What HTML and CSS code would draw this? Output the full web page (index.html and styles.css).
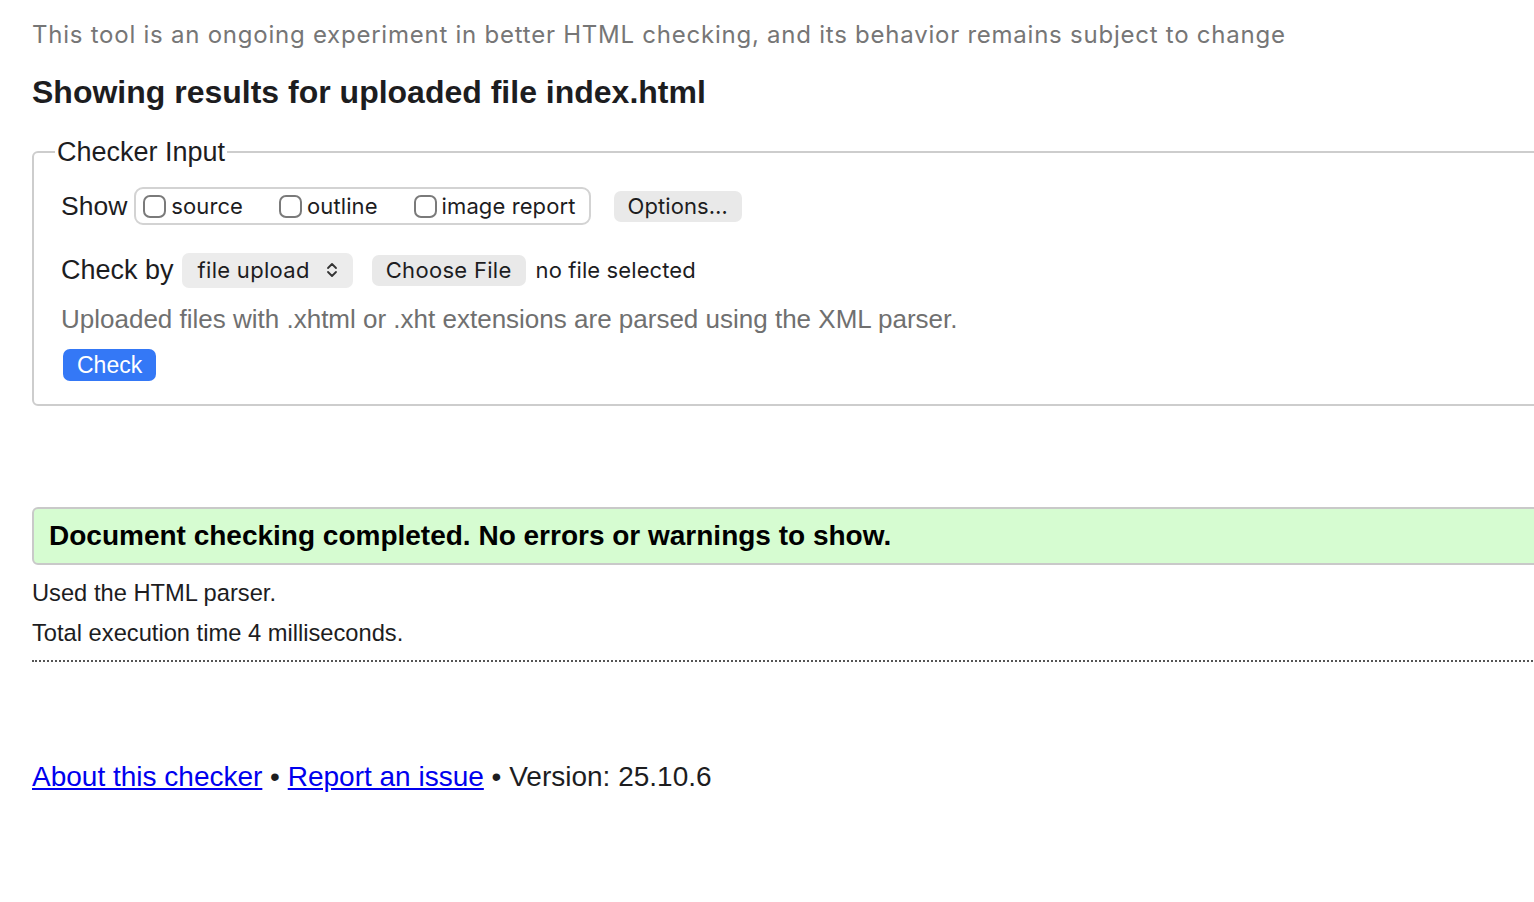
FILE: index.html
```html
<!DOCTYPE html>
<html lang="en">
<head>
<meta charset="utf-8">
<title>Nu Html Checker</title>
<link rel="stylesheet" href="styles.css">
</head>
<body>
<div class="page">
  <p class="intro">This tool is an ongoing experiment in better HTML checking, and its behavior remains subject to change</p>
  <h2 class="title">Showing results for uploaded file index.html</h2>
  <fieldset class="checker">
    <legend>Checker Input</legend>
    <div class="row">
      <span class="label">Show</span>
      <div class="group">
        <label class="opt"><span class="box"></span>source</label>
        <label class="opt"><span class="box"></span>outline</label>
        <label class="opt"><span class="box"></span>image report</label>
      </div>
      <button class="btn options">Options…</button>
    </div>
    <div class="row row2">
      <span class="label">Check by</span>
      <div class="select">file upload
        <svg class="chev" width="12" height="18" viewBox="0 0 12 18"><path d="M2 7 L6 3 L10 7 M2 11 L6 15 L10 11" fill="none" stroke="#333" stroke-width="1.8" stroke-linecap="round" stroke-linejoin="round"/></svg>
      </div>
      <button class="btn choose">Choose File</button>
      <span class="nofile">no file selected</span>
    </div>
    <p class="note">Uploaded files with .xhtml or .xht extensions are parsed using the XML parser.</p>
    <button class="submit">Check</button>
  </fieldset>
  <div class="success"><h2>Document checking completed. No errors or warnings to show.</h2></div>
  <p class="stat first">Used the HTML parser.</p>
  <p class="stat">Total execution time 4 milliseconds.</p>
  <hr class="dots">
  <p class="footer"><a href="#">About this checker</a> • <a href="#">Report an issue</a> • Version: 25.10.6</p>
</div>
</body>
</html>
```

FILE: styles.css
```css
html {
  overflow: hidden;
}
body {
  margin: 0;
  background: #fff;
  font-family: "Liberation Sans", Arial, sans-serif;
  color: #222;
}
.page {
  width: 1540px;
  padding-left: 32px;
}
.intro {
  margin: 20px 0 0;
  font-family: Inter, "Liberation Sans", sans-serif;
  font-size: 24px;
  letter-spacing: 0.76px;
  line-height: 30px;
  color: #767676;
}
.title {
  margin: 24px 0 0;
  font-size: 32px;
  line-height: 36px;
  font-weight: bold;
  color: #1d1d1f;
}
.checker {
  margin: 26px 0 0;
  padding: 19px 27px 23px;
  border: 2px solid #cdcdcd;
  border-radius: 6px;
}
.checker legend {
  margin-left: -6px;
  padding: 0 2px;
  font-size: 27px;
  line-height: 32px;
  color: #1d1d1f;
}
.row {
  display: flex;
  align-items: center;
  height: 38px;
}
.row2 {
  margin-top: 26px;
}
.label {
  font-size: 26.5px;
  color: #1d1d1f;
}
.row2 .label {
  font-size: 27px;
}
.group {
  display: flex;
  align-items: center;
  gap: 36px;
  height: 38px;
  box-sizing: border-box;
  margin-left: 7px;
  padding: 0 13px 0 7px;
  border: 2px solid #d3d3d3;
  border-radius: 9px;
}
.opt {
  display: flex;
  align-items: center;
  font-family: Inter, "Liberation Sans", sans-serif;
  font-size: 22px;
  letter-spacing: 0.1px;
  color: #1d1d1f;
}
.box {
  width: 19px;
  height: 19px;
  border: 2px solid #7a7a7a;
  border-radius: 7px;
  margin-right: 5px;
}
.btn {
  font-family: Inter, "Liberation Sans", sans-serif;
  font-size: 22px;
  letter-spacing: 0.3px;
  color: #1d1d1f;
  background: #e9e9e9;
  border: none;
  border-radius: 7px;
  height: 31px;
  padding: 0 14px;
}
.options {
  margin-left: 23px;
  letter-spacing: 0.1px;
}
.select {
  display: flex;
  align-items: center;
  gap: 16px;
  margin-left: 8px;
  height: 35px;
  padding: 0 15px 0 16px;
  background: #ececec;
  border-radius: 7px;
  font-family: Inter, "Liberation Sans", sans-serif;
  font-size: 22px;
  letter-spacing: 0.3px;
  color: #1d1d1f;
}
.choose {
  margin-left: 19px;
}
.nofile {
  margin-left: 10px;
  font-family: Inter, "Liberation Sans", sans-serif;
  font-size: 22px;
  letter-spacing: 0.1px;
  color: #1d1d1f;
}
.note {
  margin: 15px 0 0;
  font-size: 26px;
  line-height: 30px;
  color: #707070;
}
.submit {
  display: block;
  margin: 15px 0 0 2px;
  height: 32px;
  padding: 0 14px;
  background: #3478f6;
  color: #fff;
  border: none;
  border-radius: 7px;
  font-family: "Liberation Sans", Arial, sans-serif;
  font-size: 23px;
}
.success {
  margin-top: 101px;
  height: 58px;
  box-sizing: border-box;
  display: flex;
  align-items: center;
  padding-left: 15px;
  background: #d6fcd1;
  border: 2px solid #c9c9c9;
  border-radius: 6px;
}
.success h2 {
  margin: 0;
  font-size: 28px;
  font-weight: bold;
  color: #000;
}
.stat {
  margin: 12px 0 0;
  font-size: 23.7px;
  line-height: 28px;
  color: #1d1d1f;
}
.stat.first {
  margin-top: 14px;
}
.dots {
  margin: 13px 0 0;
  border: none;
  border-top: 2px dotted #555;
  height: 0;
}
.footer {
  margin: 98px 0 0;
  font-size: 28px;
  line-height: 34px;
  color: #1d1d1f;
}
.footer a {
  color: #0000ee;
}
```
